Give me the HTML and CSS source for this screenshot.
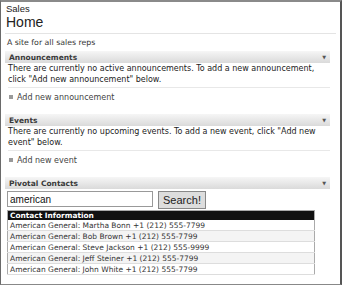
FILE: index.html
```html
<!DOCTYPE html>
<html lang="en">
<head>
    <meta charset="UTF-8">
    <title>Sales - Home</title>
    <link rel="stylesheet" href="styles.css">
</head>
<body>

<div class="frame">
    <div class="site-title">
        <div class="site-name">Sales</div>
        <div class="page-name">Home</div>
    </div>

    <p class="description">A site for all sales reps</p>

    <div class="webpart">
        <div class="wp-header"><span>Announcements</span><span class="arrow">&#9660;</span></div>
        <p class="wp-empty">There are currently no active announcements. To add a new announcement, click "Add new announcement" below.</p>
        <div class="wp-footer"><span class="bullet"></span>Add new announcement</div>
    </div>

    <div class="webpart">
        <div class="wp-header"><span>Events</span><span class="arrow">&#9660;</span></div>
        <p class="wp-empty">There are currently no upcoming events. To add a new event, click "Add new event" below.</p>
        <div class="wp-footer"><span class="bullet"></span>Add new event</div>
    </div>

    <div class="webpart">
        <div class="wp-header"><span>Pivotal Contacts</span><span class="arrow">&#9660;</span></div>
        <div class="search">
            <input type="text" class="search-box" value="american">
            <button class="search-btn">Search!</button>
        </div>
        <table class="contacts">
            <tr><th>Contact Information</th></tr>
            <tr><td>American General: Martha Bonn +1 (212) 555-7799</td></tr>
            <tr class="alt"><td>American General: Bob Brown +1 (212) 555-7799</td></tr>
            <tr><td>American General: Steve Jackson +1 (212) 555-9999</td></tr>
            <tr class="alt"><td>American General: Jeff Steiner +1 (212) 555-7799</td></tr>
            <tr><td>American General: John White +1 (212) 555-7799</td></tr>
        </table>
    </div>
</div>

</body>
</html>
```

FILE: styles.css
```css
body {
    margin: 0;
    padding: 0;
    background-color: white;
    font-family: "DejaVu Sans", Verdana, sans-serif;
}
.frame {
    width: 342px;
    height: 285px;
    box-sizing: border-box;
    border-top: 2px solid #8a8a8a;
    border-left: 1px solid #6a6a6a;
    border-right: 2px solid #555;
    border-bottom: 1px solid #888;
    padding: 0 0 0 4px;
    overflow: hidden;
}
.site-title {
    font-family: "Liberation Sans", Arial, sans-serif;
    color: #222;
    padding: 1px 0 3px 1px;
    margin-right: 4px;
    border-bottom: 1px solid #e4e4e4;
}
.site-name {
    font-size: 9.5px;
    line-height: 11px;
}
.page-name {
    font-size: 14px;
    line-height: 16px;
}
.description {
    font-size: 7.8px;
    line-height: 9px;
    color: #333;
    margin: 4px 0 4px 2px;
}
.webpart {
    margin-right: 10px;
}
.wp-header {
    display: flex;
    justify-content: space-between;
    align-items: center;
    height: 12px;
    padding: 0 4px;
    background: linear-gradient(#f6f6f6, #dadada);
    font-size: 7.5px;
    font-weight: bold;
    color: #3a3a3a;
}
.arrow {
    font-size: 5px;
    color: #555;
}
.wp-empty {
    font-size: 8px;
    line-height: 11px;
    color: #222;
    margin: 0 0 0 3px;
    padding-bottom: 2px;
    border-bottom: 1px solid #e8e8e8;
}
.wp-footer {
    font-size: 8px;
    line-height: 10px;
    color: #444;
    padding: 5px 0 11px 4px;
}
.bullet {
    display: inline-block;
    width: 4px;
    height: 4px;
    background-color: #999;
    margin-right: 4px;
    vertical-align: 1px;
}
.search {
    display: flex;
    align-items: flex-start;
    gap: 5px;
    height: 18px;
    margin: 2px 0 1px 2px;
}
.search-box {
    width: 146px;
    height: 16px;
    box-sizing: border-box;
    border: 1px solid #999;
    font-family: "Liberation Sans", Arial, sans-serif;
    font-size: 10px;
    color: #111;
    padding: 0 2px;
    margin: 0;
}
.search-btn {
    height: 18px;
    width: 48px;
    padding: 0;
    margin: 0;
    font-family: "Liberation Sans", Arial, sans-serif;
    font-size: 11px;
    color: #222;
    background-color: #ddd;
    border: 1px solid #888;
}
.contacts {
    border-collapse: collapse;
    width: 308px;
    margin-left: 2px;
    border: 1px solid #aaa;
    font-size: 7.5px;
    line-height: 9px;
}
.contacts th {
    background-color: #111;
    color: white;
    text-align: left;
    font-size: 7.4px;
    padding: 0 2px;
    height: 9px;
}
.contacts td {
    padding: 0 2px;
    height: 10px;
    border-bottom: 1px solid #ddd;
    color: #333;
}
.contacts tr.alt td {
    background-color: #f4f4f4;
}
```
